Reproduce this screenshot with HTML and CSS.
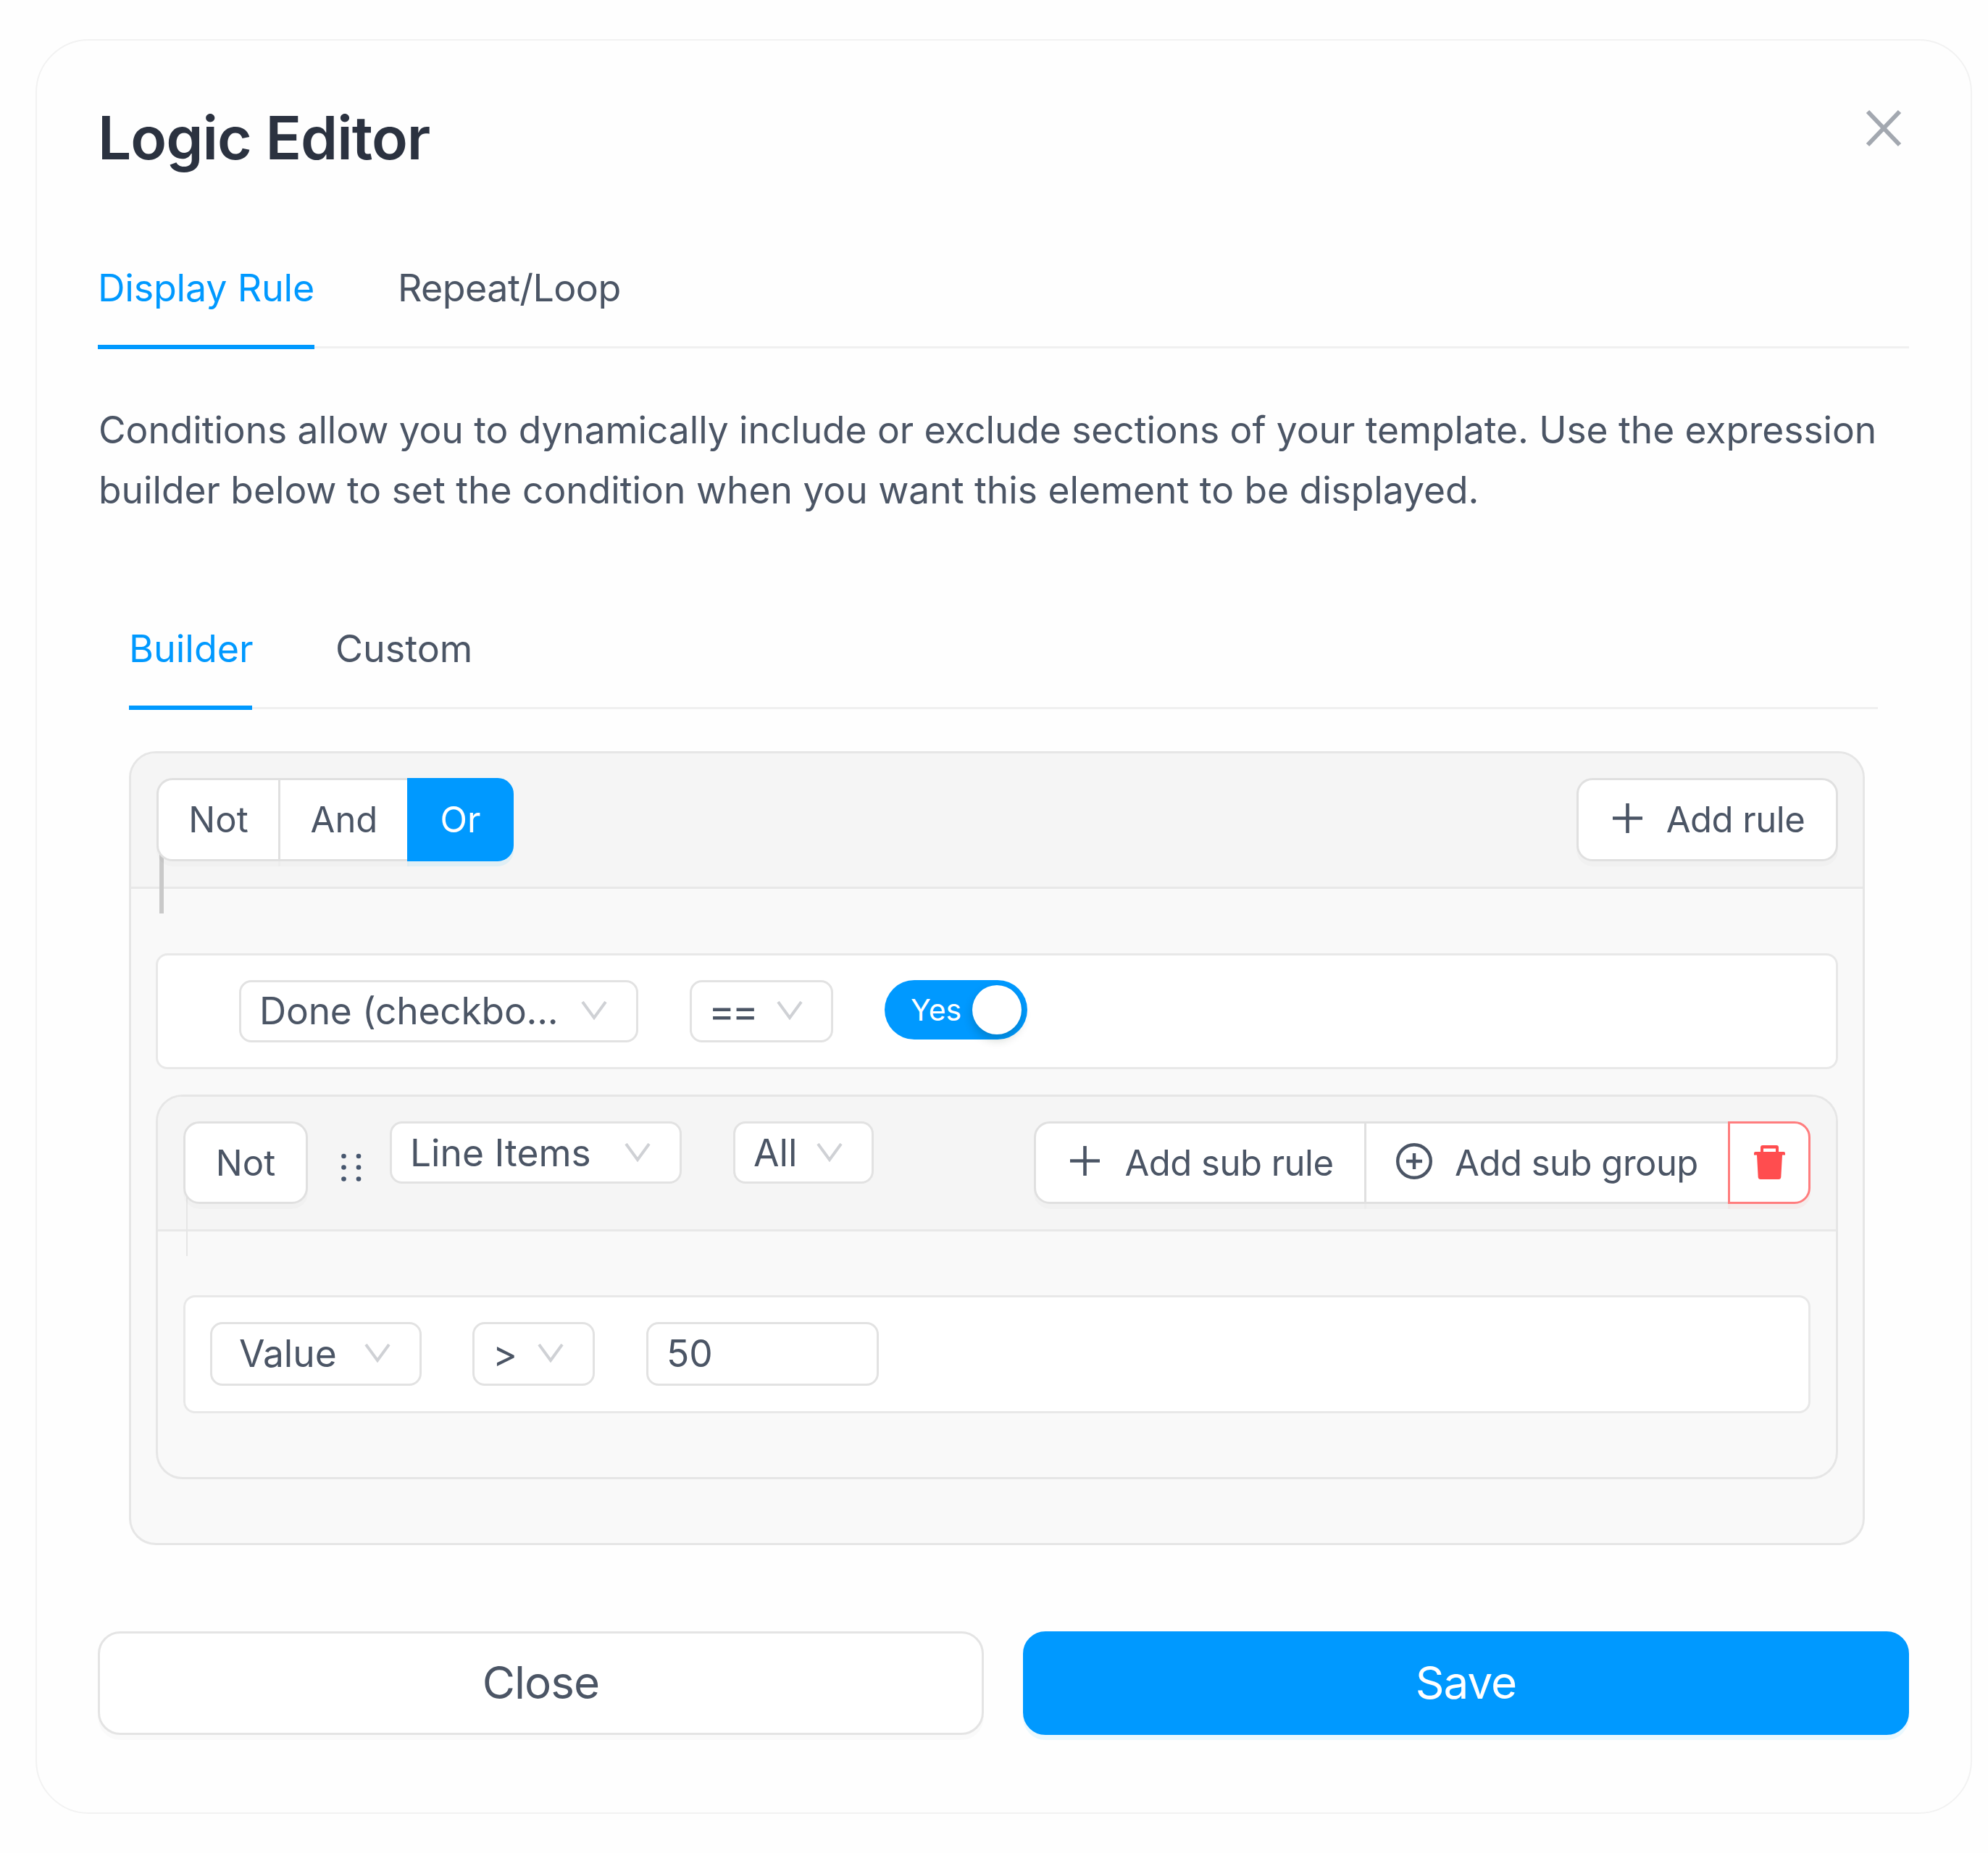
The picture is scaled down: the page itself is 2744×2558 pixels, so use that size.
FILE: index.html
```
<!DOCTYPE html>
<html lang="en">
<head>
    <meta charset="UTF-8">
    <title>Logic Editor</title>
    <link rel="stylesheet" href="styles.css">
</head>
<body>
<div class="modal">
    <div class="modal-header">
        <h1>Logic Editor</h1>
        <svg class="close-icon" viewBox="0 0 50 52"><path d="M3 3L47 49M47 3L3 49"/></svg>
    </div>

    <ul class="tabs">
        <li class="tab selected t-display">Display Rule</li>
        <li class="tab t-repeat">Repeat/Loop</li>
    </ul>

    <p class="intro"><span class="line1">Conditions allow you to dynamically include or exclude sections of your template. Use the expression</span><br>builder below to set the condition when you want this element to be displayed.</p>

    <div class="editor">
        <ul class="tabs">
            <li class="tab selected t-builder">Builder</li>
            <li class="tab">Custom</li>
        </ul>

        <div class="group">
            <div class="group-header">
                <div class="btn-group">
                    <span class="btn btn-not">Not</span>
                    <span class="btn btn-and">And</span>
                    <span class="btn btn-or">Or</span>
                </div>
                <div class="btn-group">
                    <span class="btn btn-add">
                        <svg class="plus" viewBox="0 0 41 41"><path d="M20.5 0V41M0 20.5H41"/></svg>
                        <b>Add rule</b>
                    </span>
                </div>
            </div>
            <div class="group-body">
                <div class="rule">
                    <div class="select s-field"><span>Done (checkbo...</span><svg viewBox="0 0 36 26"><path d="M2 1L18 23L34 1"/></svg></div>
                    <div class="select s-equal"><span>==</span><svg viewBox="0 0 36 26"><path d="M2 1L18 23L34 1"/></svg></div>
                    <div class="switch"><span>Yes</span><i></i></div>
                </div>

                <div class="group sub">
                    <div class="group-header">
                        <div class="btn-group">
                            <span class="btn btn-not">Not</span>
                        </div>
                        <svg class="drag" viewBox="0 0 28 40">
                            <circle cx="3.5" cy="4" r="3.3"/><circle cx="24" cy="4" r="3.3"/>
                            <circle cx="3.5" cy="19.5" r="3.3"/><circle cx="24" cy="19.5" r="3.3"/>
                            <circle cx="3.5" cy="35.5" r="3.3"/><circle cx="24" cy="35.5" r="3.3"/>
                        </svg>
                        <div class="select s-items"><span>Line Items</span><svg viewBox="0 0 36 26"><path d="M2 1L18 23L34 1"/></svg></div>
                        <div class="select s-all"><span>All</span><svg viewBox="0 0 36 26"><path d="M2 1L18 23L34 1"/></svg></div>
                        <div class="btn-group actions">
                            <span class="btn btn-subrule">
                                <svg class="plus" viewBox="0 0 41 41"><path d="M20.5 0V41M0 20.5H41"/></svg>
                                <b>Add sub rule</b>
                            </span>
                            <span class="btn btn-subgroup">
                                <svg class="plus-circle" viewBox="0 0 50 50"><circle cx="25" cy="25" r="22.8"/><path d="M25 14V36M14 25H36"/></svg>
                                <b>Add sub group</b>
                            </span>
                            <span class="btn btn-delete">
                                <svg class="trash" viewBox="0 0 43 47"><path d="M9 9V3Q9 0 12 0H31Q34 0 34 3V9H41Q43 9 43 11V13.500H39L37.300 44Q37 47 34 47H9Q6 47 5.700 44L4 13.500H0V11Q0 9 2 9ZM13 9H30V4.500H13Z" fill-rule="evenodd"/></svg>
                            </span>
                        </div>
                    </div>
                    <div class="group-body">
                        <div class="rule">
                            <div class="select s-value"><span>Value</span><svg viewBox="0 0 36 26"><path d="M2 1L18 23L34 1"/></svg></div>
                            <div class="select s-more"><span>&gt;</span><svg viewBox="0 0 36 26"><path d="M2 1L18 23L34 1"/></svg></div>
                            <div class="select s-input"><span>50</span></div>
                        </div>
                    </div>
                </div>
            </div>
        </div>
    </div>

    <div class="modal-footer">
        <div class="action action-close">Close</div>
        <div class="action action-save">Save</div>
    </div>
</div>
</body>
</html>
```

FILE: styles.css
```
*{
    margin: 0;
    padding: 0;
    box-sizing: border-box;
}
body{
    background: #fefefe;
    font-family: Inter, "Liberation Sans", sans-serif;
    font-size: 51.5px;
    color: #4b5565;
}
li{
    list-style: none;
}
b, i{
    font-weight: normal;
    font-style: normal;
}
svg{
    display: block;
    flex: none;
    fill: none;
}
.modal{
    width: 2673px;
    height: 2450px;
    margin: 54px 0 0 49px;
    padding: 84px 85px 0 84px;
    border: 2px solid #f2f2f2;
    border-radius: 74px;
}
.modal-header{
    display: flex;
    justify-content: space-between;
    height: 100px;
}
.modal-header h1{
    font-size: 82px;
    line-height: 102px;
    font-weight: 600;
    color: #2b3240;
    letter-spacing: -1px;
}
.close-icon{
    width: 50px;
    height: 52px;
    margin: 11px 10px 0 0;
    stroke: #a3a8b0;
    stroke-width: 6;
}

/* tabs */
.tabs{
    display: flex;
    gap: 115px;
    height: 116px;
    margin-top: 125px;
    border-bottom: 3px solid #f0f0f0;
}
.tab{
    position: relative;
    line-height: 66px;
    font-size: 52px;
    white-space: nowrap;
}
.tabs .selected{
    color: #0099ff;
}
.tabs .selected::after{
    content: "";
    position: absolute;
    left: 0;
    right: 0;
    bottom: -4px;
    height: 6px;
    background: #0099ff;
}
.t-display{
    width: 299px;
    letter-spacing: -.2px;
}
.t-repeat{
    letter-spacing: -.6px;
}
.t-builder{
    width: 170px;
}
.intro{
    margin-top: 71px;
    padding-left: 1px;
    line-height: 83px;
    white-space: nowrap;
}
.line1{
    letter-spacing: -.06px;
}

/* rule builder */
.editor{
    padding: 0 43px;
}
.editor .tabs{
    margin-top: 145px;
}
.group{
    width: 2396px;
    margin-top: 58px;
    border: 3px solid #e6e6e6;
    border-radius: 37px;
    background: #f9f9f9;
}
.group-header{
    position: relative;
    display: flex;
    justify-content: space-between;
    align-items: flex-start;
    height: 187px;
    padding: 34px 34px 0 35px;
    border-bottom: 3px solid #e8e8e8;
    border-radius: 34px 34px 0 0;
    background: #f5f5f5;
}
/* connector that drops from the first button */
.group-header::before{
    content: "";
    position: absolute;
    left: 39px;
    top: 136px;
    width: 6px;
    height: 85px;
    background: #c9c9c9;
}
.group-body{
    padding: 89px 34px 88px;
}
.btn-group{
    position: relative;
    display: flex;
}
.btn{
    display: flex;
    align-items: center;
    justify-content: center;
    height: 115px;
    border: 3px solid #e0e0e0;
    background: #fff;
    font-size: 49px;
    white-space: nowrap;
    box-shadow: 0 7px 0 rgba(0, 0, 0, .016);
}
.btn b{
    letter-spacing: -.5px;
}
.btn + .btn{
    margin-left: -3px;
}
.btn:first-child{
    border-top-left-radius: 22px;
    border-bottom-left-radius: 22px;
}
.btn:last-child{
    border-top-right-radius: 22px;
    border-bottom-right-radius: 22px;
}
.btn-not{
    width: 171px;
}
.btn-and{
    width: 181px;
    padding-left: 1px;
}
.btn-or{
    width: 147px;
    border-color: #0099ff;
    background: #0099ff;
    color: #fff;
    box-shadow: 0 7px 0 rgba(5, 175, 255, .08);
}
.btn-add{
    width: 361px;
    padding-left: 4px;
    gap: 33px;
}
.plus{
    width: 41px;
    height: 41px;
    margin-top: -5px;
    stroke: #4b5565;
    stroke-width: 4.6;
}
.rule{
    display: flex;
    align-items: flex-start;
    height: 160px;
    padding: 34px 34px 0;
    border: 3px solid #e8e8e8;
    border-radius: 16px;
    background: #fff;
}
.select{
    display: flex;
    align-items: center;
    justify-content: space-between;
    height: 86px;
    padding: 0 40px 0 25px;
    border: 3px solid #e2e2e2;
    border-radius: 17px;
    background: #fff;
    line-height: 60px;
    white-space: nowrap;
}
.select svg{
    width: 36px;
    height: 26px;
    stroke: #cfd1d5;
    stroke-width: 4;
}
.s-field{
    width: 551px;
    margin-left: 78px;
    padding-bottom: 3px;
    letter-spacing: -.2px;
}
.s-equal{
    width: 198px;
    margin-left: 71px;
    padding-left: 23px;
    padding-right: 39px;
    padding-bottom: 3px;
}
.s-equal span{
    font-size: 55px;
    letter-spacing: -4px;
}
.switch{
    display: flex;
    align-items: center;
    justify-content: space-between;
    width: 197px;
    height: 82px;
    margin-left: 71px;
    padding: 0 8px 0 36px;
    border-radius: 41px;
    background: #0099ff;
    color: #fff;
    font-size: 41px;
}
.switch i{
    width: 68px;
    height: 68px;
    border-radius: 50%;
    background: #fff;
    box-shadow: 0 7px 14px rgba(0, 35, 11, .2);
}

/* nested group */
.sub{
    width: auto;
    margin-top: 35px;
}
.sub > .group-header{
    justify-content: flex-start;
    height: 186px;
    padding: 34px 35px 0;
}
.sub > .group-header::before{
    left: 39px;
    width: 2px;
    height: 84px;
    background: #e6e6e6;
}
.sub > .group-body{
    padding: 88px 35px;
}
.sub .btn{
    height: 114px;
}
.sub .btn-not{
    width: 172px;
}
.drag{
    width: 28px;
    height: 40px;
    margin: 44px 0 0 46px;
    fill: #46566e;
}
.s-items{
    width: 403px;
    margin-left: 39px;
}
.s-all{
    width: 194px;
    margin-left: 71px;
}
.actions{
    margin-left: auto;
}
.btn-subrule{
    width: 459px;
    padding-left: 5px;
    gap: 34px;
}
.btn-subgroup{
    width: 505px;
    gap: 31px;
}
.btn-delete{
    width: 114px;
    border-color: #ff7d7e;
    box-shadow: 0 7px 0 rgba(255, 38, 5, .04);
}
.plus-circle{
    width: 50px;
    height: 50px;
    margin-top: -4px;
    stroke: #4b5565;
    stroke-width: 4.4;
}
.trash{
    width: 43px;
    height: 47px;
    margin-top: -2px;
    fill: #ff4d4f;
}
.sub .rule{
    height: 163px;
}
.sub .rule .select{
    height: 88px;
    padding-bottom: 2px;
}
.s-value{
    width: 292px;
    padding-left: 37px;
}
.s-more{
    width: 169px;
    margin-left: 70px;
}
.s-input{
    width: 321px;
    margin-left: 71px;
}

/* footer */
.modal-footer{
    display: grid;
    grid-template-columns: 1fr 1fr;
    gap: 54px;
    margin-top: 119px;
}
.action{
    height: 143px;
    border: 3px solid #e4e4e4;
    border-radius: 31px;
    background: #fff;
    font-size: 62px;
    line-height: 136px;
    letter-spacing: -1px;
    text-align: center;
    box-shadow: 0 7px 0 rgba(0, 0, 0, .016);
}
.action-save{
    border-color: #0099ff;
    background: #0099ff;
    color: #fff;
    box-shadow: 0 7px 0 rgba(5, 175, 255, .08);
}
```
